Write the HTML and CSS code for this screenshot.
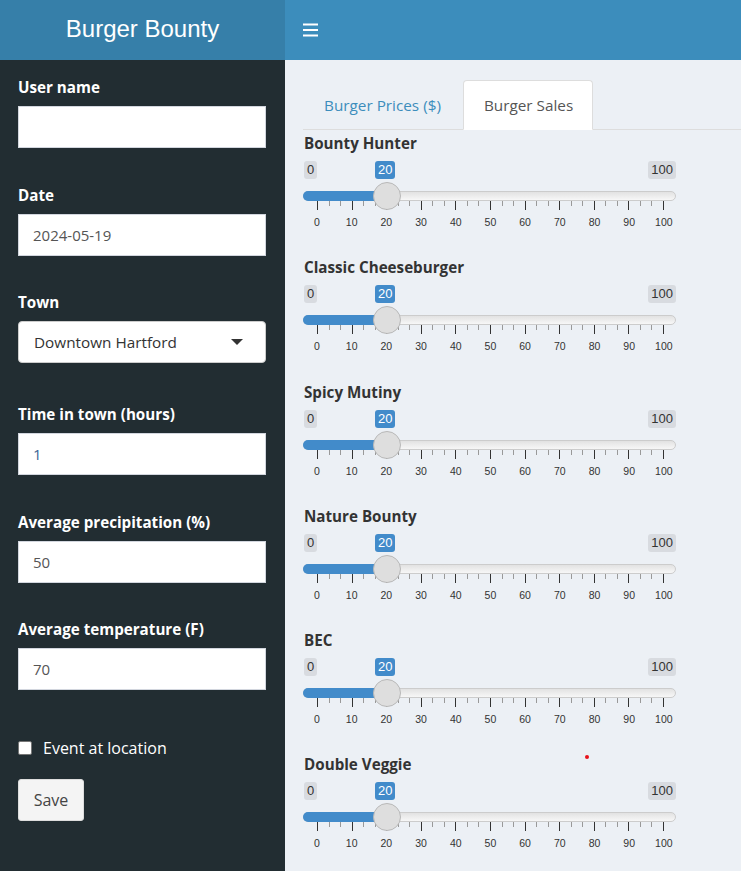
FILE: index.html
```html
<!DOCTYPE html>
<html>
<head>
<meta charset="utf-8">
<title>Burger Bounty</title>
<link rel="stylesheet" href="styles.css">
</head>
<body>
<div class="wrapper">
  <header class="logo">Burger Bounty</header>
  <nav class="navbar">
    <svg class="burger" width="15" height="14" viewBox="0 0 15 14"><rect x="0" y="0.5" width="15" height="2" fill="#fff"/><rect x="0" y="6" width="15" height="2" fill="#fff"/><rect x="0" y="11.5" width="15" height="2" fill="#fff"/></svg>
  </nav>
  <aside class="sidebar">
    <div class="form-group">
      <label class="field-label">User name</label>
      <div class="input"></div>
    </div>
    <div class="form-group">
      <label class="field-label">Date</label>
      <div class="input">2024-05-19</div>
    </div>
    <div class="form-group form-group-select">
      <label class="field-label">Town</label>
      <div class="select"><span>Downtown Hartford</span><span class="caret"></span></div>
    </div>
    <div class="form-group">
      <label class="field-label">Time in town (hours)</label>
      <div class="input input-num">1</div>
    </div>
    <div class="form-group">
      <label class="field-label">Average precipitation (%)</label>
      <div class="input">50</div>
    </div>
    <div class="form-group">
      <label class="field-label">Average temperature (F)</label>
      <div class="input">70</div>
    </div>
    <div class="checkbox-row"><span class="checkbox"></span><span>Event at location</span></div>
    <div class="btn">Save</div>
  </aside>
  <main class="content">
    <div class="tabs">
      <div class="tab">Burger Prices ($)</div>
      <div class="tab tab-active">Burger Sales</div>
    </div>
    <div class="tab-content">
      <div class="slider-group">
        <div class="slider-label">Bounty Hunter</div>
        <div class="irs">
          <div class="irs-labels"><span class="irs-min">0</span><span class="irs-single" style="left:80px">20</span><span class="irs-max">100</span></div>
          <div class="irs-line"><div class="irs-bar" style="width:83px"></div><div class="irs-handle" style="left:69px"></div></div>
          <div class="irs-grid"><div class="ticks"></div><div class="grid-text"><span>0</span><span>10</span><span>20</span><span>30</span><span>40</span><span>50</span><span>60</span><span>70</span><span>80</span><span>90</span><span>100</span></div></div>
        </div>
      </div>
      <div class="slider-group">
        <div class="slider-label">Classic Cheeseburger</div>
        <div class="irs">
          <div class="irs-labels"><span class="irs-min">0</span><span class="irs-single" style="left:80px">20</span><span class="irs-max">100</span></div>
          <div class="irs-line"><div class="irs-bar" style="width:83px"></div><div class="irs-handle" style="left:69px"></div></div>
          <div class="irs-grid"><div class="ticks"></div><div class="grid-text"><span>0</span><span>10</span><span>20</span><span>30</span><span>40</span><span>50</span><span>60</span><span>70</span><span>80</span><span>90</span><span>100</span></div></div>
        </div>
      </div>
      <div class="slider-group">
        <div class="slider-label">Spicy Mutiny</div>
        <div class="irs">
          <div class="irs-labels"><span class="irs-min">0</span><span class="irs-single" style="left:80px">20</span><span class="irs-max">100</span></div>
          <div class="irs-line"><div class="irs-bar" style="width:83px"></div><div class="irs-handle" style="left:69px"></div></div>
          <div class="irs-grid"><div class="ticks"></div><div class="grid-text"><span>0</span><span>10</span><span>20</span><span>30</span><span>40</span><span>50</span><span>60</span><span>70</span><span>80</span><span>90</span><span>100</span></div></div>
        </div>
      </div>
      <div class="slider-group">
        <div class="slider-label">Nature Bounty</div>
        <div class="irs">
          <div class="irs-labels"><span class="irs-min">0</span><span class="irs-single" style="left:80px">20</span><span class="irs-max">100</span></div>
          <div class="irs-line"><div class="irs-bar" style="width:83px"></div><div class="irs-handle" style="left:69px"></div></div>
          <div class="irs-grid"><div class="ticks"></div><div class="grid-text"><span>0</span><span>10</span><span>20</span><span>30</span><span>40</span><span>50</span><span>60</span><span>70</span><span>80</span><span>90</span><span>100</span></div></div>
        </div>
      </div>
      <div class="slider-group">
        <div class="slider-label">BEC</div>
        <div class="irs">
          <div class="irs-labels"><span class="irs-min">0</span><span class="irs-single" style="left:80px">20</span><span class="irs-max">100</span></div>
          <div class="irs-line"><div class="irs-bar" style="width:83px"></div><div class="irs-handle" style="left:69px"></div></div>
          <div class="irs-grid"><div class="ticks"></div><div class="grid-text"><span>0</span><span>10</span><span>20</span><span>30</span><span>40</span><span>50</span><span>60</span><span>70</span><span>80</span><span>90</span><span>100</span></div></div>
        </div>
      </div>
      <div class="slider-group">
        <div class="slider-label">Double Veggie</div>
        <span class="red-dot"></span>
        <div class="irs">
          <div class="irs-labels"><span class="irs-min">0</span><span class="irs-single" style="left:80px">20</span><span class="irs-max">100</span></div>
          <div class="irs-line"><div class="irs-bar" style="width:83px"></div><div class="irs-handle" style="left:69px"></div></div>
          <div class="irs-grid"><div class="ticks"></div><div class="grid-text"><span>0</span><span>10</span><span>20</span><span>30</span><span>40</span><span>50</span><span>60</span><span>70</span><span>80</span><span>90</span><span>100</span></div></div>
        </div>
      </div>
    </div>
  </main>
</div>
</body>
</html>
```

FILE: styles.css
```css
html, body {
  margin: 0;
  padding: 0;
  height: 871px;
  overflow: hidden;
}
body {
  font-family: "Open Sans", "Noto Sans", sans-serif;
  color: #333;
}
.wrapper {
  display: grid;
  grid-template-columns: 285px 1fr;
  grid-template-rows: 60px 811px;
  height: 871px;
}
.logo {
  background: #367fa9;
  color: #fff;
  font-family: "Liberation Sans", Arial, sans-serif;
  font-size: 24px;
  text-align: center;
  line-height: 57px;
}
.navbar {
  background: #3c8dbc;
  display: flex;
  align-items: center;
  padding-left: 18px;
}
.burger { display: block; margin-top: -1px; }

.sidebar {
  background: #222d32;
  padding: 17px 19px 0 18px;
  overflow: hidden;
}
.form-group { margin-bottom: 36.5px; }
.form-group-select { margin-bottom: 41px; }
.field-label {
  display: block;
  color: #fff;
  font-weight: 700;
  font-size: 15.2px;
  line-height: 20px;
  margin-bottom: 9px;
}
.input {
  box-sizing: border-box;
  height: 42px;
  background: #fff;
  border: 1px solid #d2d6de;
  padding: 0 14px;
  font-size: 15px;
  line-height: 40px;
  color: #555;
}
.input-num { color: #3d6594; }
.select {
  box-sizing: border-box;
  height: 42px;
  background: #fff;
  border: 1px solid #ccc;
  border-radius: 4px;
  padding: 0 22px 0 15px;
  font-size: 15.3px;
  color: #333;
  display: flex;
  align-items: center;
  justify-content: space-between;
}
.caret {
  width: 0;
  height: 0;
  border-left: 6px solid transparent;
  border-right: 6px solid transparent;
  border-top: 6px solid #333;
}
.checkbox-row {
  display: flex;
  align-items: center;
  gap: 11px;
  height: 20px;
  color: #fff;
  font-size: 16px;
  margin-top: 48px;
}
.checkbox {
  box-sizing: border-box;
  width: 14px;
  height: 14px;
  background: #fff;
  border: 1px solid #767676;
  border-radius: 2px;
}
.btn {
  box-sizing: border-box;
  display: flex;
  align-items: center;
  justify-content: center;
  margin-top: 21px;
  width: 66px;
  height: 42px;
  background: #f4f4f4;
  border: 1px solid #ddd;
  border-radius: 3px;
  color: #444;
  font-size: 16px;
}

.content {
  background: #ecf0f5;
  padding: 20px 0 0 18px;
  overflow: hidden;
  position: relative;
}
.tabs {
  display: flex;
  border-bottom: 1px solid #ddd;
  gap: 2px;
}
.tab {
  box-sizing: border-box;
  height: 50px;
  padding: 0 19px 0 20px;
  display: flex;
  align-items: center;
  font-size: 15.3px;
  color: #3c8dbc;
  border: 1px solid transparent;
  border-radius: 4px 4px 0 0;
  margin-bottom: -1px;
}
.tab-active {
  background: #fff;
  border-color: #ddd;
  border-bottom-color: #fff;
  color: #555;
}
.tab-content { padding-top: 3px; }

.slider-group {
  height: 124.3px;
  width: 373px;
  position: relative;
}
.slider-label {
  font-weight: 700;
  font-size: 15.2px;
  line-height: 20px;
  padding-left: 1px;
}
.red-dot {
  position: absolute;
  left: 282px;
  top: 1px;
  width: 4px;
  height: 4px;
  border-radius: 50%;
  background: #e8121b;
}
.irs {
  padding-top: 8px;
}
.irs-labels {
  position: relative;
  display: flex;
  justify-content: space-between;
  height: 18px;
  font-family: "Liberation Sans", Arial, sans-serif;
  font-size: 13px;
}
.irs-min, .irs-max, .irs-single {
  display: inline-block;
  line-height: 18px;
  padding: 0 3px;
  border-radius: 3px;
  background: #d8dbe0;
  color: #333;
}
.irs-min { margin-left: 1px; }
.irs-single {
  position: absolute;
  top: 0;
  margin-left: -8px;
  background: #428bca;
  color: #fff;
}
.irs-line {
  position: relative;
  margin-top: 12px;
  height: 10px;
  box-sizing: border-box;
  border: 1px solid #ccc;
  border-radius: 6px;
  background: linear-gradient(#e2e2e2, #f7f7f7);
}
.irs-bar {
  position: absolute;
  left: -1px;
  top: -1px;
  height: 10px;
  background: #428bca;
  border-radius: 6px 0 0 6px;
}
.irs-handle {
  position: absolute;
  top: -10px;
  width: 28px;
  height: 28px;
  box-sizing: border-box;
  border: 1px solid #b8b8b8;
  border-radius: 50%;
  background: #dedede;
}
.irs-grid {
  margin: 0 13px 0 14px;
}
.ticks {
  height: 9px;
  background:
    repeating-linear-gradient(to right, #333 0 1px, transparent 1px 34.6px) 0 0 / 100% 9px no-repeat,
    repeating-linear-gradient(to right, transparent 0 11.53px, #999 11.53px 12.53px, transparent 12.53px 23.07px, #999 23.07px 24.07px, transparent 24.07px 34.6px) 0 0 / 100% 5px no-repeat;
  width: 347px;
}
.grid-text {
  display: flex;
  justify-content: space-between;
  width: 347px;
  margin-top: 6px;
  font-family: "Liberation Sans", Arial, sans-serif;
  font-size: 10.5px;
  color: #333;
  line-height: 12px;
}
.grid-text span {
  width: 0;
  display: flex;
  justify-content: center;
  white-space: nowrap;
}
```
